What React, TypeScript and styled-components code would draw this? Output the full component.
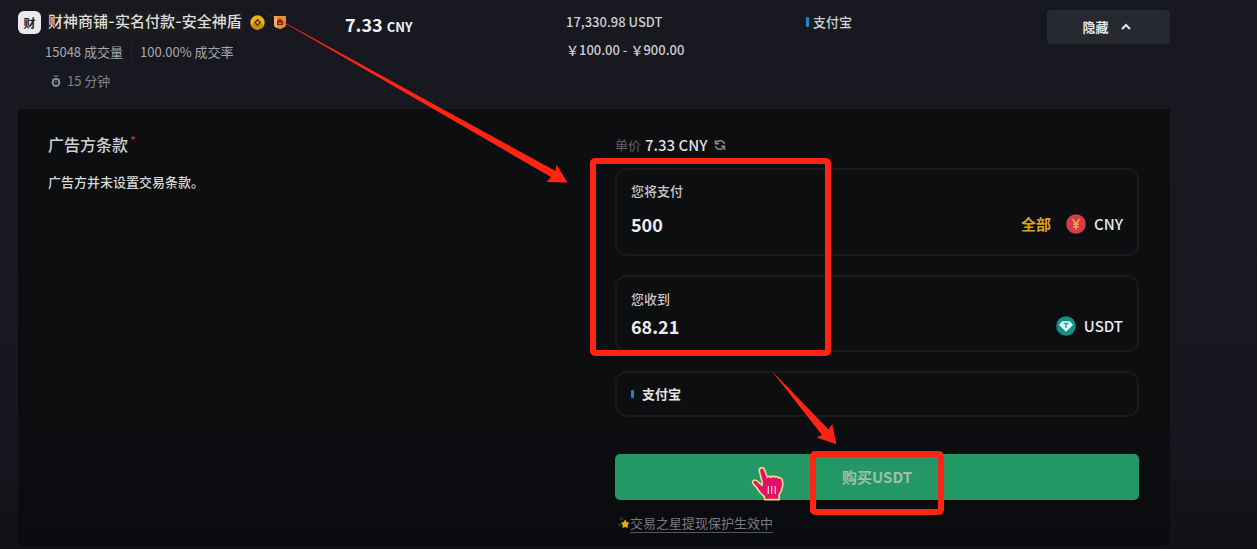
import React, { useState } from "react";
import styled, { createGlobalStyle } from "styled-components";

const sans = `"Noto Sans CJK SC", "Noto Sans", sans-serif`;

const GlobalStyle = createGlobalStyle`
  *, *::before, *::after { box-sizing: border-box; }
  body {
    margin: 0;
    background: #14151b;
    color: #dcdde0;
    font-family: ${sans};
    font-size: 13px;
    line-height: 20px;
  }
  button, input {
    margin: 0;
    padding: 0;
    border: 0;
    background: none;
    color: inherit;
    font: inherit;
  }
  button { cursor: pointer; }
  svg { display: block; flex: none; }
  h2, p { margin: 0; }
`;

const Page = styled.main`
  min-height: 100vh;
  padding: 0 87px 3px 18px;
  overflow: hidden;
  background: linear-gradient(#181920 0, #17181f 75%, #101217 100%);
`;

const Offer = styled.header`
  display: grid;
  grid-template-columns: 327fr 221fr 240fr 241fr 123fr;
  align-items: start;
  min-height: 108px;
  padding-top: 10px;
`;

const Merchant = styled.div`
  display: flex;
  align-items: center;
  height: 24px;
  gap: 8px;
`;

const Avatar = styled.span`
  width: 23px;
  height: 23px;
  border-radius: 6px;
  background: #e9eaee;
  color: #24262b;
  font-size: 12px;
  font-weight: 700;
  line-height: 23px;
  text-align: center;
`;

const MerchantName = styled.a`
  margin-left: -1px;
  background: #1c1b1e;
  color: #dddddb;
  font-family: Inter, ${sans};
  font-size: 15px;
  font-weight: 500;
  line-height: 22px;
  text-decoration: none;
  white-space: nowrap;
`;

const Stats = styled.div`
  display: flex;
  gap: 8px;
  margin-top: 8px;
  padding-left: 27px;
  color: #a6a8ad;
  white-space: nowrap;

  span + span {
    padding-left: 8px;
    border-left: 1px solid #24262c;
  }
`;

const TimeLimit = styled.div`
  display: flex;
  align-items: center;
  gap: 6px;
  margin-top: 9px;
  padding-left: 33px;
  color: #7f828a;
`;

const Price = styled.div`
  color: #f0f1f3;
  font-size: 18px;
  font-weight: 700;
  line-height: 28px;

  small {
    font-size: 13px;
  }
`;

const Amounts = styled.div`
  display: grid;
  gap: 8px;
  padding-top: 2px;
  color: #cdced2;
  font-weight: 500;
`;

const Method = styled.div<{ $strong?: boolean }>`
  display: flex;
  align-items: center;
  gap: ${(p) => (p.$strong ? 8 : 4)}px;
  color: ${(p) => (p.$strong ? "#e4e5e7" : "#cdced2")};
  font-weight: ${(p) => (p.$strong ? 700 : 500)};

  &::before {
    content: "";
    width: 3px;
    height: ${(p) => (p.$strong ? 8 : 10)}px;
    border-radius: 1px;
    background: #2385c6;
  }
`;

const OfferMethod = styled.div`
  padding-top: 2px;
`;

const HideButton = styled.button`
  display: flex;
  align-items: center;
  justify-content: center;
  gap: 12px;
  height: 34px;
  padding-right: 4px;
  border-radius: 4px;
  background: #26292f;
  color: #e6e7e9;
  font-weight: 700;
`;

const Panel = styled.section`
  display: grid;
  grid-template-columns: repeat(2, minmax(0, 1fr));
  gap: 43px;
  padding: 25px 31px 12px 30px;
  border-top: 1px solid #1a1b1e;
  border-radius: 0 0 8px 8px;
  background: linear-gradient(#0d0e10 0, #0d0e10 70%, #0a0b0e 100%);
`;

const TermsTitle = styled.h2`
  color: #cfd0d3;
  font-size: 16px;
  font-weight: 500;
  line-height: 20px;

  sup {
    margin-left: 2px;
    color: #b5323f;
    font-size: 12px;
    line-height: 1;
  }
`;

const Terms = styled.p`
  margin-top: 18px;
  color: #d6d7d9;
  font-weight: 500;
`;

const Form = styled.form`
  position: relative;
`;

const UnitPrice = styled.div`
  display: flex;
  align-items: center;
  gap: 4px;
  height: 22px;
  margin-bottom: 12px;
  color: #5f6269;

  strong {
    color: #dedfe2;
    font-size: 15px;
    font-weight: 500;
  }
`;

const Refresh = styled.button`
  margin-left: 2px;
  color: #85888d;
`;

const Box = styled.div`
  margin-bottom: 19px;
  padding: 11px 14px;
  border: 2px solid #17191c;
  border-radius: 12px;
`;

const Field = styled(Box)<{ $tall?: boolean }>`
  padding: ${(p) => (p.$tall ? "11px 14px 18px" : "12px 14px 12px")};

  label {
    display: block;
    margin-bottom: ${(p) => (p.$tall ? 11 : 5)}px;
    color: #c6c7ca;
    font-weight: 500;
  }
`;

const FieldRow = styled.div`
  display: flex;
  align-items: center;
  height: 24px;
`;

const AmountInput = styled.input`
  flex: 1;
  min-width: 0;
  height: 24px;
  outline: 0;
  color: #ececee;
  font-size: 18px;
  font-weight: 700;
`;

const AllButton = styled.button`
  margin-right: 15px;
  color: #d9a31c;
  font-size: 15px;
  font-weight: 700;
`;

const Currency = styled.span`
  display: flex;
  align-items: center;
  gap: 8px;
  color: #e6e7e9;
  font-size: 15px;
  font-weight: 500;
`;

const BuyButton = styled.button`
  display: block;
  width: 100%;
  height: 46px;
  margin-top: 37px;
  border-radius: 5px;
  background: #239865;
  color: #9dbfae;
  font-size: 15px;
  font-weight: 700;
`;

const Protection = styled.a`
  display: flex;
  align-items: center;
  height: 22px;
  margin-top: 12px;
  padding-left: 3px;
  color: #777a80;
  text-decoration: none;

  span {
    border-bottom: 1px solid #54575d;
    line-height: 18px;
  }
`;

const Marker = styled.div<{ $x: number; $y: number; $w: number; $h: number }>`
  position: absolute;
  left: ${(p) => p.$x}px;
  top: ${(p) => p.$y}px;
  width: ${(p) => p.$w}px;
  height: ${(p) => p.$h}px;
  border: 6px solid #ff2414;
  border-radius: 5px;
  pointer-events: none;
`;

const Overlay = styled.svg<{ $x: number; $y: number }>`
  position: absolute;
  left: ${(p) => p.$x}px;
  top: ${(p) => p.$y}px;
  pointer-events: none;
`;

const CoinBadge = () => (
  <svg width="15" height="15" viewBox="0 0 15 15" aria-hidden="true">
    <circle cx="7.5" cy="7.5" r="7.2" fill="#e9b21d" />
    <path d="M1 10.5A7.2 7.2 0 0 0 14 10.5L11 8 7.500 11 4 8Z" fill="#c98d12" />
    <path d="M7.500 3.800 11.200 7.500 7.500 11.200 3.800 7.500Z" fill="#4a3a0e" />
    <path d="M7.500 5.800 9.200 7.500 7.500 9.200 5.800 7.500Z" fill="#d9a524" />
  </svg>
);

const ShieldBadge = () => (
  <svg width="14" height="15" viewBox="0 0 14 15" aria-hidden="true">
    <path d="M1 1H13V9.500Q13 11.500 11 12.400L7 14.300 3 12.400Q1 11.500 1 9.500Z" fill="#eb8a36" />
    <path d="M1 1H4V12.800L3 12.400Q1 11.500 1 9.500Z" fill="#f5b262" />
    <path d="M4 6 7 3.500 10 6V10H4Z" fill="#7b2413" />
    <path d="M5.500 7.500H8.500V9H5.500Z" fill="#e5702d" />
  </svg>
);

const Stopwatch = () => (
  <svg width="10" height="13" viewBox="0 0 10 13" fill="none" stroke="#8d939b" aria-hidden="true">
    <path d="M3 1H7" stroke="#70757d" strokeWidth="1.500" />
    <circle cx="5" cy="7.500" r="3.400" strokeWidth="2" />
    <path d="M5 6V8" strokeWidth="1" />
    <path d="M1 3.800 2 4.500M9 3.800 8 4.500" />
  </svg>
);

const ChevronUp = () => (
  <svg width="10" height="8" viewBox="0 0 10 8" fill="none" stroke="#e6e7e9" strokeWidth="2" aria-hidden="true">
    <path d="M1 6 5 2 9 6" />
  </svg>
);

const RefreshIcon = () => (
  <svg width="12" height="12" viewBox="0 0 12 12" fill="none" stroke="currentColor" strokeWidth="1.500" aria-hidden="true">
    <path d="M1.500 1V4.800H5" />
    <path d="M1.800 4.500Q3 1.800 6.200 1.800 9.800 1.800 10.300 5.200" />
    <path d="M10.500 11V7.200H7" />
    <path d="M10.200 7.500Q9 10.200 5.800 10.200 2.200 10.200 1.700 6.800" />
  </svg>
);

const CnyIcon = () => (
  <svg width="20" height="20" viewBox="0 0 20 20" aria-hidden="true">
    <circle cx="10" cy="10" r="9.800" fill="#d63a50" />
    <path d="M6.500 5 10 10 13.500 5M10 10V15.500M7.200 10.300H12.800M7.200 12.700H12.800" fill="none" stroke="#f7a640" strokeWidth="1.600" />
  </svg>
);

const UsdtIcon = () => (
  <svg width="20" height="20" viewBox="0 0 20 20" aria-hidden="true">
    <circle cx="10" cy="10" r="9.800" fill="#158f86" />
    <path d="M6 5.200H14L17 9 10 15.800 3 9Z" fill="#dff8f5" />
    <path d="M7.500 7.500H12.500M10 7.500V12" fill="none" stroke="#2aa198" strokeWidth="1.400" />
  </svg>
);

const StarIcon = () => (
  <svg width="12" height="14" viewBox="0 0 12 14" aria-hidden="true">
    <circle cx="3.500" cy="3" r="1.800" fill="#2b2d31" />
    <circle cx="1.800" cy="9" r="1.600" fill="#33302a" />
    <path d="M7.200 3.500 8.700 6 11.500 6.700 9.700 9 9.900 12 7.200 10.900 4.500 12 4.700 9 3 6.700 5.700 6Z" fill="#e8a91e" />
  </svg>
);

const HandPointer = () => (
  <Overlay $x={136} $y={332} width="34" height="36" viewBox="0 0 102 108" aria-hidden="true">
    <path
      d="M25 16Q24 6 32 5 39 5 42 15L49 34Q54 28 60 34 65 27 72 33 77 29 82 36 88 32 93 40 97 50 94 64 92 76 84 86L85 101H41L40 92 26 78 17 65 7 54Q2 44 11 42 18 42 24 50L33 58 34 50Z"
      fill="#e0106c"
      stroke="#f3d783"
      strokeWidth="5"
      strokeLinejoin="round"
    />
    <path d="M52 60V84M62 60V84M73 60V84" stroke="#f6c6c4" strokeWidth="4" />
  </Overlay>
);

export default function App() {
  const [pay, setPay] = useState("500");
  const [receive, setReceive] = useState("68.21");

  return (
    <>
      <GlobalStyle />
      <Page>
        <Offer>
          <div>
            <Merchant>
              <Avatar>财</Avatar>
              <MerchantName href="#merchant">财神商铺-实名付款-安全神盾</MerchantName>
              <CoinBadge />
              <ShieldBadge />
            </Merchant>
            <Stats>
              <span>15048 成交量</span>
              <span>100.00% 成交率</span>
            </Stats>
            <TimeLimit>
              <Stopwatch />
              15 分钟
            </TimeLimit>
          </div>
          <Price>
            7.33 <small>CNY</small>
          </Price>
          <Amounts>
            <span>17,330.98 USDT</span>
            <span>￥100.00 - ￥900.00</span>
          </Amounts>
          <OfferMethod>
            <Method>支付宝</Method>
          </OfferMethod>
          <HideButton type="button">
            隐藏
            <ChevronUp />
          </HideButton>
        </Offer>

        <Panel>
          <div>
            <TermsTitle>
              广告方条款<sup>*</sup>
            </TermsTitle>
            <Terms>广告方并未设置交易条款。</Terms>
          </div>

          <Form onSubmit={(e) => e.preventDefault()}>
            <UnitPrice>
              单价 <strong>7.33 CNY</strong>
              <Refresh type="button" aria-label="刷新">
                <RefreshIcon />
              </Refresh>
            </UnitPrice>

            <Field $tall>
              <label htmlFor="pay">您将支付</label>
              <FieldRow>
                <AmountInput id="pay" value={pay} onChange={(e) => setPay(e.target.value)} />
                <AllButton type="button">全部</AllButton>
                <Currency>
                  <CnyIcon />
                  CNY
                </Currency>
              </FieldRow>
            </Field>

            <Field>
              <label htmlFor="receive">您收到</label>
              <FieldRow>
                <AmountInput id="receive" value={receive} onChange={(e) => setReceive(e.target.value)} />
                <Currency>
                  <UsdtIcon />
                  USDT
                </Currency>
              </FieldRow>
            </Field>

            <Box>
              <Method $strong>支付宝</Method>
            </Box>

            <BuyButton type="submit">购买USDT</BuyButton>

            <Protection href="#protection">
              <StarIcon />
              <span>交易之星提现保护生效中</span>
            </Protection>

            <Marker $x={-25} $y={24} $w={241} $h={198} />
            <Marker $x={195} $y={317} $w={134} $h={64} />
            <Overlay $x={-353} $y={-124} width="306" height="174" viewBox="262 10 306 174" aria-hidden="true">
              <path d="M262 10 555.500 171 556.500 164.500 567.500 182.500 546.500 182 551 177Z" fill="#ff2414" />
            </Overlay>
            <Overlay $x={156} $y={236} width="66" height="75" viewBox="771 370 66 75" aria-hidden="true">
              <path d="M771 370 828.500 429.500 832.300 424 836.300 444.300 816.500 437.500 822 435Z" fill="#ff2414" />
            </Overlay>
            <HandPointer />
          </Form>
        </Panel>
      </Page>
    </>
  );
}
